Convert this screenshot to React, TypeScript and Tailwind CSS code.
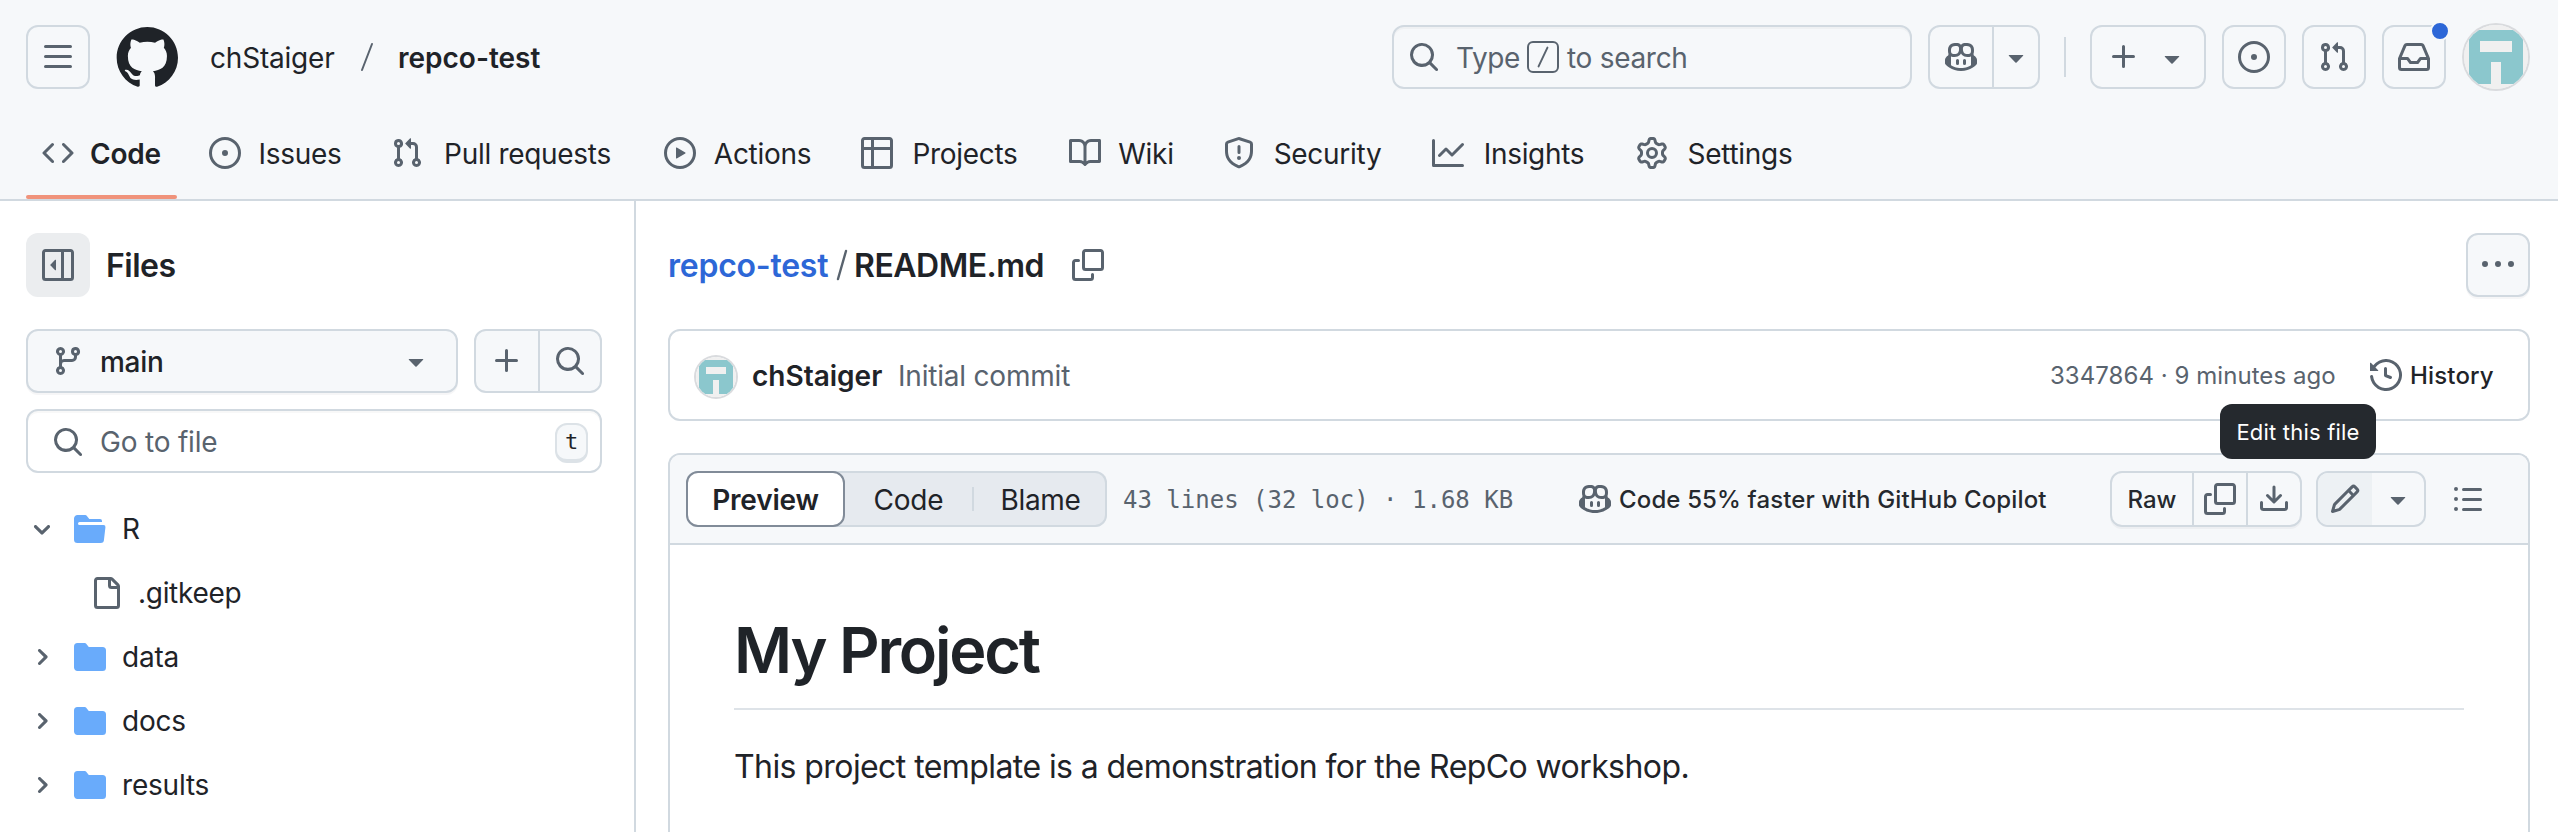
import type { ReactNode } from "react";

const PATHS = {
  bars: "M1 2.75A.75.75 0 0 1 1.75 2h12.5a.75.75 0 0 1 0 1.5H1.75A.75.75 0 0 1 1 2.75Zm0 5A.75.75 0 0 1 1.75 7h12.5a.75.75 0 0 1 0 1.5H1.75A.75.75 0 0 1 1 7.75ZM1.75 12h12.5a.75.75 0 0 1 0 1.5H1.75a.75.75 0 0 1 0-1.5Z",
  code: "m11.28 3.22 4.25 4.25a.75.75 0 0 1 0 1.06l-4.25 4.25a.749.749 0 0 1-1.275-.326.749.749 0 0 1 .215-.734L13.94 8l-3.72-3.72a.749.749 0 0 1 .326-1.275.749.749 0 0 1 .734.215Zm-6.56 0a.751.751 0 0 1 1.042.018.751.751 0 0 1 .018 1.042L2.06 8l3.72 3.72a.749.749 0 0 1-.326 1.275.749.749 0 0 1-.734-.215L.47 8.53a.75.75 0 0 1 0-1.06Z",
  issue: "M8 9.5a1.5 1.5 0 1 0 0-3 1.5 1.5 0 0 0 0 3ZM8 0a8 8 0 1 1 0 16A8 8 0 0 1 8 0ZM1.5 8a6.5 6.5 0 1 0 13 0 6.5 6.5 0 0 0-13 0Z",
  pull: "M1.5 3.25a2.25 2.25 0 1 1 3 2.122v5.256a2.251 2.251 0 1 1-1.5 0V5.372A2.25 2.25 0 0 1 1.5 3.25Zm5.677-.177L9.573.677A.25.25 0 0 1 10 .854V2.5h1A2.5 2.5 0 0 1 13.5 5v5.628a2.251 2.251 0 1 1-1.5 0V5a1 1 0 0 0-1-1h-1v1.646a.25.25 0 0 1-.427.177L7.177 3.427a.25.25 0 0 1 0-.354ZM3.75 2.5a.75.75 0 1 0 0 1.5.75.75 0 0 0 0-1.5Zm0 9.5a.75.75 0 1 0 0 1.5.75.75 0 0 0 0-1.5Zm8.25.75a.75.75 0 1 0 1.5 0 .75.75 0 0 0-1.5 0Z",
  play: "M8 0a8 8 0 1 1 0 16A8 8 0 0 1 8 0ZM1.5 8a6.5 6.5 0 1 0 13 0 6.5 6.5 0 0 0-13 0Zm4.879-2.773 4.264 2.559a.25.25 0 0 1 0 .428l-4.264 2.559A.25.25 0 0 1 6 10.559V5.442a.25.25 0 0 1 .379-.215Z",
  table: "M0 1.75C0 .784.784 0 1.75 0h12.5C15.216 0 16 .784 16 1.75v12.5A1.75 1.75 0 0 1 14.25 16H1.75A1.75 1.75 0 0 1 0 14.25ZM6.5 6.5v8h7.75a.25.25 0 0 0 .25-.25V6.5Zm8-1.5V1.75a.25.25 0 0 0-.25-.25H6.5V5Zm-13 1.5v7.75c0 .138.112.25.25.25H5v-8ZM5 5V1.5H1.75a.25.25 0 0 0-.25.25V5Z",
  book: "M0 1.75A.75.75 0 0 1 .75 1h4.253c1.227 0 2.317.59 3 1.501A3.743 3.743 0 0 1 11.006 1h4.245a.75.75 0 0 1 .75.75v10.5a.75.75 0 0 1-.75.75h-4.507a2.25 2.25 0 0 0-1.591.659l-.622.621a.75.75 0 0 1-1.06 0l-.622-.621A2.25 2.25 0 0 0 5.258 13H.75a.75.75 0 0 1-.75-.75Zm7.251 10.324.004-5.073-.002-2.253A2.25 2.25 0 0 0 5.003 2.5H1.5v9h3.757a3.75 3.75 0 0 1 1.994.574ZM8.755 4.75l-.004 7.322a3.752 3.752 0 0 1 1.992-.572H14.5v-9h-3.495a2.25 2.25 0 0 0-2.25 2.25Z",
  shield: "M7.467.133a1.748 1.748 0 0 1 1.066 0l5.25 1.68A1.75 1.75 0 0 1 15 3.48V7c0 1.566-.32 3.182-1.303 4.682-.983 1.498-2.585 2.813-5.032 3.855a1.697 1.697 0 0 1-1.33 0c-2.447-1.042-4.049-2.357-5.032-3.855C1.32 10.182 1 8.566 1 7V3.48a1.755 1.755 0 0 1 1.217-1.667Zm.61 1.429a.25.25 0 0 0-.153 0l-5.25 1.68a.25.25 0 0 0-.174.238V7c0 1.358.275 2.666 1.057 3.86.784 1.194 2.121 2.34 4.366 3.297a.196.196 0 0 0 .154 0c2.245-.956 3.582-2.104 4.366-3.298C13.225 9.666 13.5 8.36 13.5 7V3.48a.251.251 0 0 0-.174-.237l-5.25-1.68ZM8.75 4.75v3a.75.75 0 0 1-1.5 0v-3a.75.75 0 0 1 1.5 0ZM9 10.5a1 1 0 1 1-2 0 1 1 0 0 1 2 0Z",
  graph: "M1.5 1.75V13.5h13.75a.75.75 0 0 1 0 1.5H.75a.75.75 0 0 1-.75-.75V1.75a.75.75 0 0 1 1.5 0Zm14.28 2.53-5.25 5.25a.75.75 0 0 1-1.06 0L7 7.06 4.28 9.78a.751.751 0 0 1-1.042-.018.751.751 0 0 1-.018-1.042l3.25-3.25a.75.75 0 0 1 1.06 0L10 7.94l4.72-4.72a.751.751 0 0 1 1.042.018.751.751 0 0 1 .018 1.042Z",
  gear: "M8 0a8.2 8.2 0 0 1 .701.031C9.444.095 9.99.645 10.16 1.29l.288 1.107c.018.066.079.158.212.224.231.114.454.243.668.386.123.082.233.09.299.071l1.103-.303c.644-.176 1.392.021 1.82.63.27.385.506.792.704 1.218.315.675.111 1.422-.364 1.891l-.814.806c-.049.048-.098.147-.088.294.016.257.016.515 0 .772-.01.147.038.246.088.294l.814.806c.475.469.679 1.216.364 1.891a7.977 7.977 0 0 1-.704 1.217c-.428.61-1.176.807-1.82.63l-1.102-.302c-.067-.019-.177-.011-.3.071a5.909 5.909 0 0 1-.668.386c-.133.066-.194.158-.211.224l-.29 1.106c-.168.646-.715 1.196-1.458 1.26a8.006 8.006 0 0 1-1.402 0c-.743-.064-1.289-.614-1.458-1.26l-.289-1.106c-.018-.066-.079-.158-.212-.224a5.738 5.738 0 0 1-.668-.386c-.123-.082-.233-.09-.299-.071l-1.103.303c-.644.176-1.392-.021-1.82-.63a8.12 8.12 0 0 1-.704-1.218c-.315-.675-.111-1.422.363-1.891l.815-.806c.05-.048.098-.147.088-.294a6.214 6.214 0 0 1 0-.772c.01-.147-.038-.246-.088-.294l-.815-.806C.635 6.045.431 5.298.746 4.623a7.92 7.92 0 0 1 .704-1.217c.428-.61 1.176-.807 1.82-.63l1.102.302c.067.019.177.011.3-.071.214-.143.437-.272.668-.386.133-.066.194-.158.211-.224l.29-1.106C6.009.645 6.556.095 7.299.03 7.53.01 7.764 0 8 0Zm-.571 1.525c-.036.003-.108.036-.137.146l-.289 1.105c-.147.561-.549.967-.998 1.189-.173.086-.34.183-.5.29-.417.278-.97.423-1.529.27l-1.103-.303c-.109-.03-.175.016-.195.045-.22.312-.412.644-.573.99-.014.031-.021.11.059.19l.815.806c.411.406.562.957.53 1.456a4.709 4.709 0 0 0 0 .582c.032.499-.119 1.05-.53 1.456l-.815.806c-.081.08-.073.159-.059.19.162.346.353.677.573.989.02.03.085.076.195.046l1.102-.303c.56-.153 1.113-.008 1.53.27.161.107.328.204.501.29.447.222.85.629.997 1.189l.289 1.105c.029.109.101.143.137.146a6.6 6.6 0 0 0 1.142 0c.036-.003.108-.036.137-.146l.289-1.105c.147-.561.549-.967.998-1.189.173-.086.34-.183.5-.29.417-.278.97-.423 1.529-.27l1.103.303c.109.029.175-.016.195-.045.22-.313.411-.644.573-.99.014-.031.021-.11-.059-.19l-.815-.806c-.411-.406-.562-.957-.53-1.456a4.709 4.709 0 0 0 0-.582c-.032-.499.119-1.05.53-1.456l.815-.806c.081-.08.073-.159.059-.19a6.464 6.464 0 0 0-.573-.989c-.02-.03-.085-.076-.195-.046l-1.102.303c-.56.153-1.113.008-1.53-.27a4.44 4.44 0 0 0-.501-.29c-.447-.222-.85-.629-.997-1.189l-.289-1.105c-.029-.11-.101-.143-.137-.146a6.6 6.6 0 0 0-1.142 0ZM11 8a3 3 0 1 1-6 0 3 3 0 0 1 6 0ZM9.5 8a1.5 1.5 0 1 0-3.001.001A1.5 1.5 0 0 0 9.5 8Z",
  search: "M10.68 11.74a6 6 0 0 1-7.922-8.982 6 6 0 0 1 8.982 7.922l3.04 3.04a.749.749 0 0 1-.326 1.275.749.749 0 0 1-.734-.215ZM11.5 7a4.499 4.499 0 1 0-8.997 0A4.499 4.499 0 0 0 11.5 7Z",
  copilot: "M7.998 15.035c-4.562 0-7.873-2.914-7.998-3.749V9.338c.085-.628.677-1.686 1.588-2.065.013-.07.024-.143.036-.218.029-.183.06-.384.126-.612-.201-.508-.254-1.084-.254-1.656 0-.87.128-1.769.693-2.484.579-.733 1.494-1.124 2.724-1.261 1.206-.134 2.262.034 2.944.765.05.053.096.108.139.165.044-.057.094-.112.143-.165.682-.731 1.738-.899 2.944-.765 1.23.137 2.145.528 2.724 1.261.566.715.693 1.614.693 2.484 0 .572-.053 1.148-.254 1.656.066.228.098.429.126.612.012.076.024.148.037.218.924.385 1.522 1.471 1.591 2.095v1.872c0 .766-3.351 3.795-8.002 3.795Zm0-1.485c2.28 0 4.584-1.11 5.002-1.433V7.862l-.023-.116c-.49.21-1.075.291-1.727.291-1.146 0-2.059-.327-2.71-.991A3.222 3.222 0 0 1 8 6.303a3.24 3.24 0 0 1-.544.743c-.65.664-1.563.991-2.71.991-.652 0-1.236-.081-1.727-.291l-.023.116v4.255c.419.323 2.722 1.433 5.002 1.433ZM6.762 2.83c-.193-.206-.637-.413-1.682-.297-1.019.113-1.479.404-1.713.7-.247.312-.369.789-.369 1.554 0 .793.129 1.171.308 1.371.162.181.519.379 1.442.379.853 0 1.339-.235 1.638-.54.315-.322.527-.827.617-1.553.117-.935-.037-1.395-.241-1.614Zm4.155-.297c-1.044-.116-1.488.091-1.681.297-.204.219-.359.679-.242 1.614.091.726.303 1.231.618 1.553.299.305.784.54 1.638.54.922 0 1.28-.198 1.442-.379.179-.2.308-.578.308-1.371 0-.765-.123-1.242-.37-1.554-.233-.296-.693-.587-1.713-.7ZM6.25 9.037a.75.75 0 0 1 .75.75v1.501a.75.75 0 0 1-1.5 0V9.787a.75.75 0 0 1 .75-.75Zm4.25.75v1.501a.75.75 0 0 1-1.5 0V9.787a.75.75 0 0 1 1.5 0Z",
  caret: "m4.427 7.427 3.396 3.396a.25.25 0 0 0 .354 0l3.396-3.396A.25.25 0 0 0 11.396 7H4.604a.25.25 0 0 0-.177.427Z",
  plus: "M7.75 2a.75.75 0 0 1 .75.75V7h4.25a.75.75 0 0 1 0 1.5H8.5v4.25a.75.75 0 0 1-1.5 0V8.5H2.75a.75.75 0 0 1 0-1.5H7V2.75A.75.75 0 0 1 7.75 2Z",
  inbox: "M2.8 2.06A1.75 1.75 0 0 1 4.41 1h7.18c.7 0 1.333.417 1.61 1.06l2.74 6.395c.04.093.06.194.06.295v4.5A1.75 1.75 0 0 1 14.25 15H1.75A1.75 1.75 0 0 1 0 13.25v-4.5c0-.101.02-.202.06-.295Zm1.61.44a.25.25 0 0 0-.23.152L1.887 8H4.75a.75.75 0 0 1 .6.3L6.625 10h2.75l1.275-1.7a.75.75 0 0 1 .6-.3h2.863L11.82 2.652a.25.25 0 0 0-.23-.152Zm10.09 7h-2.875l-1.275 1.7a.75.75 0 0 1-.6.3h-3.5a.75.75 0 0 1-.6-.3L4.375 9.5H1.5v3.75c0 .138.112.25.25.25h12.5a.25.25 0 0 0 .25-.25Z",
  sidebar: "m4.177 7.823 2.396-2.396A.25.25 0 0 1 7 5.604v4.792a.25.25 0 0 1-.427.177L4.177 8.177a.25.25 0 0 1 0-.354ZM0 1.75C0 .784.784 0 1.75 0h12.5C15.216 0 16 .784 16 1.75v12.5A1.75 1.75 0 0 1 14.25 16H1.75A1.75 1.75 0 0 1 0 14.25Zm1.75-.25a.25.25 0 0 0-.25.25v12.5c0 .138.112.25.25.25H9.5v-13Zm12.5 13a.25.25 0 0 0 .25-.25V1.75a.25.25 0 0 0-.25-.25H11v13Z",
  branch: "M9.5 3.25a2.25 2.25 0 1 1 3 2.122V6A2.5 2.5 0 0 1 10 8.5H6a1 1 0 0 0-1 1v1.128a2.251 2.251 0 1 1-1.5 0V5.372a2.25 2.25 0 1 1 1.5 0v1.836A2.493 2.493 0 0 1 6 7h4a1 1 0 0 0 1-1v-.628A2.25 2.25 0 0 1 9.5 3.25Zm-6 0a.75.75 0 1 0 1.5 0 .75.75 0 0 0-1.5 0Zm8.25-.75a.75.75 0 1 0 0 1.5.75.75 0 0 0 0-1.5ZM4.25 12a.75.75 0 1 0 0 1.5.75.75 0 0 0 0-1.5Z",
  folder: "M1.75 1A1.75 1.75 0 0 0 0 2.75v10.5C0 14.216.784 15 1.75 15h12.5A1.75 1.75 0 0 0 16 13.25v-8.5A1.75 1.75 0 0 0 14.25 3H7.5a.25.25 0 0 1-.2-.1l-.9-1.2C6.07 1.26 5.55 1 5 1H1.75Z",
  folderOpen: "M.513 1.513A1.75 1.75 0 0 1 1.75 1h3.5c.55 0 1.07.26 1.4.7l.9 1.2a.25.25 0 0 0 .2.1H13a1 1 0 0 1 1 1v.5H2.75a.75.75 0 0 0 0 1.5h11.978a1 1 0 0 1 .994 1.117L15 13.25A1.75 1.75 0 0 1 13.25 15H1.75A1.75 1.75 0 0 1 0 13.25V2.75c0-.464.184-.91.513-1.237Z",
  file: "M2 1.75C2 .784 2.784 0 3.75 0h6.586c.464 0 .909.184 1.237.513l2.914 2.914c.329.328.513.773.513 1.237v9.586A1.75 1.75 0 0 1 13.25 16h-9.5A1.75 1.75 0 0 1 2 14.25Zm1.75-.25a.25.25 0 0 0-.25.25v12.5c0 .138.112.25.25.25h9.5a.25.25 0 0 0 .25-.25V6h-2.75A1.75 1.75 0 0 1 9 4.25V1.5Zm6.75.062V4.25c0 .138.112.25.25.25h2.688l-.011-.013-2.914-2.914-.013-.011Z",
  copy: "M0 6.75C0 5.784.784 5 1.75 5h1.5a.75.75 0 0 1 0 1.5h-1.5a.25.25 0 0 0-.25.25v7.5c0 .138.112.25.25.25h7.5a.25.25 0 0 0 .25-.25v-1.5a.75.75 0 0 1 1.5 0v1.5A1.75 1.75 0 0 1 9.25 16h-7.5A1.75 1.75 0 0 1 0 14.25ZM5 1.75C5 .784 5.784 0 6.75 0h7.5C15.216 0 16 .784 16 1.75v7.5A1.75 1.75 0 0 1 14.25 11h-7.5A1.75 1.75 0 0 1 5 9.25Zm1.75-.25a.25.25 0 0 0-.25.25v7.5c0 .138.112.25.25.25h7.5a.25.25 0 0 0 .25-.25v-7.5a.25.25 0 0 0-.25-.25Z",
  download: "M2.75 14A1.75 1.75 0 0 1 1 12.25v-2.5a.75.75 0 0 1 1.5 0v2.5c0 .138.112.25.25.25h10.5a.25.25 0 0 0 .25-.25v-2.5a.75.75 0 0 1 1.5 0v2.5A1.75 1.75 0 0 1 13.25 14ZM7.25 7.689V2a.75.75 0 0 1 1.5 0v5.689l1.97-1.969a.749.749 0 1 1 1.06 1.06l-3.25 3.25a.749.749 0 0 1-1.06 0L4.22 6.78a.749.749 0 1 1 1.06-1.06l1.97 1.969Z",
  pencil: "M11.013 1.427a1.75 1.75 0 0 1 2.474 0l1.086 1.086a1.75 1.75 0 0 1 0 2.474l-8.61 8.61c-.21.21-.47.364-.756.445l-3.251.93a.75.75 0 0 1-.927-.928l.929-3.25c.081-.286.235-.547.445-.758l8.61-8.61Zm.176 4.823L9.75 4.81l-6.286 6.287a.253.253 0 0 0-.064.108l-.558 1.953 1.953-.558a.253.253 0 0 0 .108-.064Zm1.238-3.763a.25.25 0 0 0-.354 0L10.811 3.75l1.439 1.44 1.263-1.263a.25.25 0 0 0 0-.354Z",
  list: "M5.75 2.5h8.5a.75.75 0 0 1 0 1.5h-8.5a.75.75 0 0 1 0-1.5Zm0 5h8.5a.75.75 0 0 1 0 1.5h-8.5a.75.75 0 0 1 0-1.5Zm0 5h8.5a.75.75 0 0 1 0 1.5h-8.5a.75.75 0 0 1 0-1.5ZM2 14a1 1 0 1 1 0-2 1 1 0 0 1 0 2Zm1-6a1 1 0 1 1-2 0 1 1 0 0 1 2 0ZM2 4a1 1 0 1 1 0-2 1 1 0 0 1 0 2Z",
  history: "m.427 1.927 1.215 1.215a8.002 8.002 0 1 1-1.6 5.685.75.75 0 1 1 1.493-.154 6.5 6.5 0 1 0 1.18-4.458l1.358 1.358A.25.25 0 0 1 3.896 6H.25A.25.25 0 0 1 0 5.75V2.104a.25.25 0 0 1 .427-.177ZM7.75 4a.75.75 0 0 1 .75.75v2.992l2.028.812a.75.75 0 0 1-.557 1.392l-2.5-1A.751.751 0 0 1 7 8.25v-3.5A.75.75 0 0 1 7.75 4Z",
  kebab: "M8 9a1.5 1.5 0 1 0 0-3 1.5 1.5 0 0 0 0 3ZM1.5 9a1.5 1.5 0 1 0 0-3 1.5 1.5 0 0 0 0 3Zm13 0a1.5 1.5 0 1 0 0-3 1.5 1.5 0 0 0 0 3Z",
};

const CHEVRON_DOWN =
  "M6 8.825c-.2 0-.4-.1-.5-.2l-3.3-3.3c-.3-.3-.3-.8 0-1.1.3-.3.8-.3 1.1 0l2.7 2.7 2.7-2.7c.3-.3.8-.3 1.1 0 .3.3.3.8 0 1.1l-3.2 3.2c-.2.2-.4.3-.6.3Z";
const CHEVRON_RIGHT =
  "M4.7 10c-.2 0-.4-.1-.5-.2-.3-.3-.3-.8 0-1.1L6.9 6 4.2 3.3c-.3-.3-.3-.8 0-1.1.3-.3.8-.3 1.1 0l3.3 3.2c.3.3.3.8 0 1.1L5.3 9.7c-.2.2-.4.3-.6.3Z";
const MARK =
  "M12.5.75C6.146.75 1 5.896 1 12.25c0 5.089 3.292 9.387 7.863 10.91.575.101.79-.244.79-.546 0-.273-.014-1.178-.014-2.142-2.889.532-3.636-.704-3.866-1.35-.13-.331-.69-1.352-1.18-1.625-.402-.216-.977-.748-.014-.762.906-.014 1.553.834 1.769 1.179 1.035 1.74 2.688 1.25 3.349.948.1-.747.402-1.25.733-1.538-2.559-.287-5.232-1.279-5.232-5.678 0-1.25.445-2.285 1.178-3.09-.115-.288-.517-1.467.115-3.048 0 0 .963-.302 3.163 1.179.92-.259 1.897-.388 2.875-.388.977 0 1.955.13 2.875.388 2.2-1.495 3.162-1.179 3.162-1.179.633 1.581.23 2.76.115 3.048.733.805 1.179 1.825 1.179 3.09 0 4.413-2.688 5.39-5.247 5.678.417.36.776 1.05.776 2.128 0 1.538-.014 2.774-.014 3.162 0 .302.216.662.79.547C20.709 21.637 24 17.324 24 12.25 24 5.896 18.854.75 12.5.75Z";

type IconName = keyof typeof PATHS;

function Icon({ name, className = "" }: { name: IconName; className?: string }) {
  return (
    <svg viewBox="0 0 16 16" fill="currentColor" aria-hidden="true" className={`size-8 shrink-0 ${className}`}>
      <path d={PATHS[name]} />
    </svg>
  );
}

function Avatar({ className }: { className: string }) {
  return (
    <span className={`block shrink-0 overflow-hidden rounded-full ring-2 ring-[#d9dbde] ${className}`}>
      <svg viewBox="0 0 12 12" className="size-full" shapeRendering="crispEdges">
        <rect width="12" height="12" fill="#f0f0f0" />
        <rect x="1" y="1" width="10" height="10" fill="#8bc7cd" />
        <rect x="3" y="3" width="6" height="2" fill="#f0f0f0" />
        <rect x="5" y="7" width="2" height="4" fill="#f0f0f0" />
      </svg>
    </span>
  );
}

function HeaderButton({ children, className = "" }: { children: ReactNode; className?: string }) {
  return (
    <button
      className={`flex h-16 shrink-0 items-center justify-center rounded-xl border-2 border-[#d1d9e0] text-[#59636e] ${className}`}
    >
      {children}
    </button>
  );
}

const TABS: { icon: IconName; label: string; width: string; active?: boolean }[] = [
  { icon: "code", label: "Code", width: "w-[71px]", active: true },
  { icon: "issue", label: "Issues", width: "w-[86px]" },
  { icon: "pull", label: "Pull requests", width: "w-[177px]" },
  { icon: "play", label: "Actions", width: "w-[101px]" },
  { icon: "table", label: "Projects", width: "w-[112px]" },
  { icon: "book", label: "Wiki", width: "w-[58px]" },
  { icon: "shield", label: "Security", width: "w-[113px]" },
  { icon: "graph", label: "Insights", width: "w-[108px]" },
  { icon: "gear", label: "Settings", width: "w-[112px]" },
];

function Header() {
  return (
    <header className="h-[201px] shrink-0 border-b-2 border-[#d1d9e0] bg-[#f6f8fa] pt-[25px] pl-[26px]">
      <div className="flex h-16 items-center pr-7">
        <HeaderButton className="w-16">
          <Icon name="bars" />
        </HeaderButton>
        <svg viewBox="0 0 24 24" fill="#1f2328" className="ml-6 size-16 shrink-0">
          <path d={MARK} />
        </svg>
        <span className="ml-8 w-[150px] pt-0.5 tracking-[-0.2px]">chStaiger</span>
        <svg viewBox="0 0 14 30" className="h-[30px] w-[14px] shrink-0" stroke="#59636e" strokeWidth="2" strokeLinecap="round">
          <path d="M2 28 12 2" />
        </svg>
        <span className="ml-6 pt-0.5 font-semibold">repco-test</span>

        <div className="ml-auto flex h-16 w-[520px] shrink-0 items-center rounded-xl border-2 border-[#d1d9e0] pl-[14px] text-[#59636e] shadow-[inset_0_2px_0_rgba(31,35,40,0.03)]">
          <Icon name="search" />
          <span className="ml-4 w-[71px] pt-0.5 tracking-[-0.4px]">Type</span>
          <span className="flex h-8 w-8 shrink-0 items-center justify-center rounded-md border-2 border-[#59636e]">
            <svg viewBox="0 0 12 22" className="h-[22px] w-3" stroke="#59636e" strokeWidth="1.8" strokeLinecap="round">
              <path d="M1.5 20.5 10.5 1.5" />
            </svg>
          </span>
          <span className="ml-2 pt-0.5 tracking-[-0.3px]">to search</span>
        </div>

        <HeaderButton className="ml-4 w-28">
          <span className="flex h-full w-16 items-center border-r-2 border-[#d1d9e0] pl-[15px]">
            <Icon name="copilot" />
          </span>
          <span className="flex flex-1 items-center pl-[6px]">
            <Icon name="caret" />
          </span>
        </HeaderButton>
        <span className="mx-6 h-10 w-0.5 shrink-0 bg-[#d1d9e0]" />
        <HeaderButton className="w-[116px] gap-4">
          <Icon name="plus" />
          <Icon name="caret" className="mt-0.5" />
        </HeaderButton>
        <HeaderButton className="ml-4 w-16">
          <Icon name="issue" />
        </HeaderButton>
        <HeaderButton className="ml-4 w-16">
          <Icon name="pull" />
        </HeaderButton>
        <div className="relative ml-4">
          <HeaderButton className="w-16">
            <Icon name="inbox" />
          </HeaderButton>
          <span className="absolute -top-1 -right-1 size-5 rounded-full border-2 border-[#f6f8fa] bg-[#2d67d7]" />
        </div>
        <Avatar className="mr-0.5 ml-[18px] size-16" />
      </div>

      <nav className="mt-[18px] flex h-[92px] gap-4">
        {TABS.map((tab) => (
          <a key={tab.label} className="relative flex h-full items-center gap-4 px-4">
            <Icon name={tab.icon} className="text-[#59636e]" />
            <span
              className={`flex justify-center pt-0.5 whitespace-nowrap ${tab.width} ${tab.active ? "font-semibold tracking-[-0.2px]" : "tracking-[-0.3px]"}`}
            >
              {tab.label}
            </span>
            {tab.active && <span className="absolute inset-x-0 bottom-0 h-1 rounded-sm bg-[#f0937b]" />}
          </a>
        ))}
      </nav>
    </header>
  );
}

function FolderRow({ name, open = false }: { name: string; open?: boolean }) {
  return (
    <li className="flex h-16 items-center pl-[30px]">
      <svg viewBox="0 0 12 12" fill="#59636e" className="size-6 shrink-0">
        <path d={open ? CHEVRON_DOWN : CHEVRON_RIGHT} />
      </svg>
      <Icon name={open ? "folderOpen" : "folder"} className="ml-5 text-[#69abfb]" />
      <span className="ml-4 tracking-[-0.2px]">{name}</span>
    </li>
  );
}

function Sidebar() {
  return (
    <aside className="w-[636px] shrink-0 border-r-2 border-[#d1d9e0] pt-8">
      <div className="flex h-16 items-center pl-[26px]">
        <button className="flex size-16 items-center justify-center rounded-xl bg-[#ebedef] text-[#59636e]">
          <Icon name="sidebar" />
        </button>
        <h2 className="ml-4 pt-0.5 text-[32px] font-semibold tracking-[-0.5px]">Files</h2>
      </div>

      <div className="mt-8 flex gap-4 px-[26px] pr-8">
        <button className="flex h-16 w-[432px] items-center rounded-xl border-2 border-[#d1d9e0] bg-[#f6f8fa] pr-[24px] pl-6 shadow-[0_2px_0_rgba(31,35,40,0.04)]">
          <Icon name="branch" className="text-[#59636e]" />
          <span className="ml-4 pt-0.5 font-medium tracking-[-0.3px]">main</span>
          <Icon name="caret" className="ml-auto text-[#59636e]" />
        </button>
        <div className="flex h-16 w-32 overflow-hidden rounded-xl border-2 border-[#d1d9e0] bg-[#f6f8fa] text-[#59636e]">
          <button className="flex w-16 items-center border-r-2 border-[#d1d9e0] pl-[15px]">
            <Icon name="plus" />
          </button>
          <button className="flex flex-1 items-center pl-[14px]">
            <Icon name="search" />
          </button>
        </div>
      </div>

      <div className="mt-4 ml-[26px] flex h-16 w-[576px] items-center rounded-xl border-2 border-[#d1d9e0] bg-white pr-3 pl-6 text-[#59636e] shadow-[inset_0_2px_0_rgba(31,35,40,0.03)]">
        <Icon name="search" className="mt-0.5" />
        <span className="ml-4 pt-0.5 tracking-[-0.2px]">Go to file</span>
        <kbd className="mt-1 ml-auto flex h-10 w-[33px] items-center justify-center rounded-xl border-2 border-b-4 border-[#dce2e7] bg-[#f6f8fa] font-['DejaVu_Sans_Mono',monospace] text-[22px] text-[#1f2328]">
          t
        </kbd>
      </div>

      <ul className="mt-6">
        <FolderRow name="R" open />
        <li className="flex h-16 items-center pl-[90px]">
          <Icon name="file" className="text-[#59636e]" />
          <span className="ml-4 tracking-[-0.3px]">.gitkeep</span>
        </li>
        <FolderRow name="data" />
        <FolderRow name="docs" />
        <FolderRow name="results" />
      </ul>
    </aside>
  );
}

function FileToolbar() {
  return (
    <div className="flex h-[90px] shrink-0 items-center border-b-2 border-[#d1d9e0] bg-[#f6f8fa] pl-4">
      <div className="flex h-14 w-[421px] shrink-0 items-center rounded-xl bg-[#e6eaef] shadow-[inset_0_0_0_2px_#d1d9e0]">
        <span className="flex h-14 w-[159px] items-center justify-center rounded-xl border-2 border-[#818b98] bg-white pt-0.5 font-semibold tracking-[-0.2px]">
          Preview
        </span>
        <span className="flex w-[127px] justify-center pt-0.5 tracking-[-0.2px]">Code</span>
        <span className="h-6 w-0.5 bg-[#d1d9e0]" />
        <span className="flex flex-1 justify-center pt-0.5 tracking-[-0.3px]">Blame</span>
      </div>
      <span className="ml-4 w-[456px] shrink-0 pt-0.5 font-['DejaVu_Sans_Mono',monospace] text-2xl leading-[40px] whitespace-pre text-[#59636e]">
        43 lines (32 loc) · 1.68 KB
      </span>
      <Icon name="copilot" className="text-[#59636e]" />
      <span className="ml-2 w-[491px] shrink-0 pt-0.5 text-2xl font-medium tracking-[0.14px] whitespace-nowrap text-[#25292e]">
        Code 55% faster with GitHub Copilot
      </span>
      <div className="flex h-14 w-48 shrink-0 rounded-xl border-2 border-[#d1d9e0] text-[#59636e] shadow-[0_2px_0_rgba(31,35,40,0.04)]">
        <button className="flex w-[82px] items-center justify-center border-r-2 border-[#d1d9e0] pt-0.5 text-2xl font-medium text-[#25292e]">
          Raw
        </button>
        <button className="flex w-[54px] items-center justify-center border-r-2 border-[#d1d9e0]">
          <Icon name="copy" />
        </button>
        <button className="flex flex-1 items-center justify-center">
          <Icon name="download" />
        </button>
      </div>
      <div className="relative ml-[14px] flex h-14 w-[110px] shrink-0 rounded-xl border-2 border-[#d1d9e0] text-[#59636e]">
        <button className="flex w-[54px] items-center rounded-l-[10px] bg-[#edf1f4] pl-[11px]">
          <Icon name="pencil" />
        </button>
        <button className="flex flex-1 items-center pl-[10px]">
          <Icon name="caret" />
        </button>
        <span className="absolute -top-[69px] left-[-98px] flex h-[55px] w-[156px] items-center justify-center rounded-xl bg-[#25292e] text-[22px] tracking-[0.2px] whitespace-nowrap text-white">
          Edit this file
        </span>
      </div>
      <Icon name="list" className="ml-[26px] text-[#59636e]" />
    </div>
  );
}

function Main() {
  return (
    <main className="flex min-w-0 flex-1 flex-col pt-8 pr-7 pl-8">
      <div className="flex h-16 shrink-0 items-center text-[32px] tracking-[-0.5px]">
        <span className="w-[168px] pt-0.5 font-semibold tracking-[-0.25px] text-[#2d67d7]">repco-test</span>
        <svg viewBox="0 0 12 32" className="h-8 w-3 shrink-0" stroke="#59636e" strokeWidth="2.4" strokeLinecap="round">
          <path d="M2 30 10 2" />
        </svg>
        <span className="ml-1.5 w-[218px] pt-0.5 font-semibold">README.md</span>
        <Icon name="copy" className="text-[#59636e]" />
        <button className="ml-auto flex size-16 items-center justify-center rounded-xl border-2 border-[#d1d9e0] bg-[#f6f8fa] text-[#59636e] shadow-[0_2px_0_rgba(31,35,40,0.04)]">
          <Icon name="kebab" />
        </button>
      </div>

      <section className="mt-8 flex h-[92px] shrink-0 items-center rounded-xl border-2 border-[#d1d9e0] pl-[26px]">
        <Avatar className="mt-1 size-10" />
        <span className="ml-4 w-[146px] pt-0.5 font-semibold">chStaiger</span>
        <span className="pt-0.5 tracking-[-0.2px] text-[#59636e]">Initial commit</span>
        <span className="ml-auto w-[320px] pt-0.5 text-2xl tracking-[0.05px] whitespace-nowrap text-[#59636e]">
          3347864 · 9 minutes ago
        </span>
        <Icon name="history" className="text-[#59636e]" />
        <span className="ml-2 w-[118px] pt-0.5 text-2xl font-medium tracking-[0.15px]">History</span>
      </section>

      <section className="mt-8 flex flex-1 flex-col rounded-t-xl border-2 border-b-0 border-[#d1d9e0]">
        <div className="flex flex-col [&>div]:rounded-t-[10px]">
          <FileToolbar />
        </div>
        <article className="px-16 pt-16">
          <h1 className="h-[101px] border-b-2 border-[#dee3e8] text-[63px] leading-[83px] font-semibold tracking-[-2.2px]">
            My Project
          </h1>
          <p className="mt-8 text-[32px] leading-[50px] tracking-[-0.58px]">
            This project template is a demonstration for the RepCo workshop.
          </p>
        </article>
      </section>
    </main>
  );
}

export default function App() {
  return (
    <div className="flex h-[832px] w-[2558px] flex-col overflow-hidden bg-white font-['Inter',sans-serif] text-[28px] leading-[40px] text-[#1f2328]">
      <Header />
      <div className="flex min-h-0 flex-1">
        <Sidebar />
        <Main />
      </div>
    </div>
  );
}
